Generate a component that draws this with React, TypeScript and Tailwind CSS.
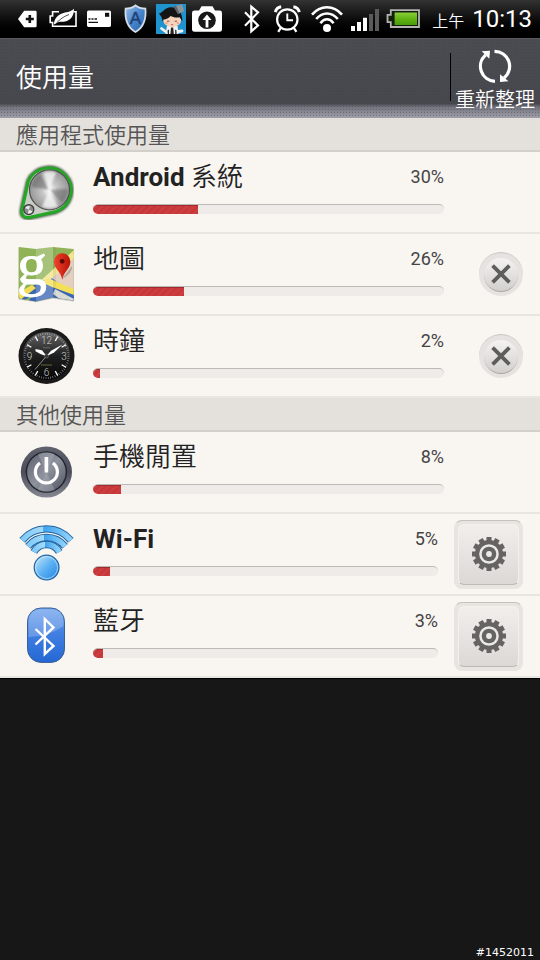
import React from 'react';

const StatusIcons: React.FC = () => (
  <div className="flex items-center gap-[6px]">
    <svg className="h-8 w-[23px]" viewBox="0 0 23 32">
      <path d="M2 16 8.2 7.8H19.5Q20.6 7.8 20.6 9V23Q20.6 24.2 19.5 24.2H8.2Z" fill="#fff" />
      <path d="M13.8 12v8M9.8 16h8" stroke="#111" strokeWidth="2.6" />
    </svg>
    <svg className="h-8 w-[34px]" viewBox="0 0 34 32" fill="none">
      <path d="M14 8.8H7.6V13H5.2V19.5H7.6V23.2H31V8.8H28.5" stroke="#fff" strokeWidth="1.6" />
      <path d="M9 21.5C9 16 12 12.5 17 10.5 21 9 25 9.5 29 5.8 29 13 25.5 17.5 20 18.6 16.5 19.3 13.5 18 11 20.5Z" fill="#fff" />
      <path d="M12 19.5C15 16 19 13.5 24 11.5" stroke="#222" strokeWidth=".8" />
    </svg>
    <svg className="h-8 w-7" viewBox="0 0 28 32">
      <rect x="2" y="7.5" width="24" height="16.4" rx="1.6" fill="#fff" />
      <path d="M20 9.8h4.2v4H20z" fill="#111" />
      <path d="M3.5 16h2M6.5 16h2M9.5 16h2.5M3.5 19.4H13" stroke="#111" strokeWidth="1.3" />
    </svg>
    <svg className="h-8 w-[31px]" viewBox="0 0 31 32">
      <defs>
        <linearGradient id="shield" x1="0" y1="0" x2="1" y2="1">
          <stop offset="0" stopColor="#8fb8e6" />
          <stop offset=".5" stopColor="#4a86cc" />
          <stop offset="1" stopColor="#2a62aa" />
        </linearGradient>
      </defs>
      <path d="M16.5 1.2C19 3.6 23 4.8 27.2 4.8 28.4 16 25.5 25.5 16.5 30 7.5 25.5 4.6 16 5.8 4.8 10 4.8 14 3.6 16.5 1.2Z" fill="#d5dde6" />
      <path d="M16.5 3.4C19 5.4 22.4 6.3 25.6 6.5 26.3 16 23.7 23.8 16.5 28 9.3 23.8 6.7 16 7.4 6.5 10.6 6.3 14 5.4 16.5 3.4Z" fill="url(#shield)" />
      <text x="16.5" y="20.5" textAnchor="middle" fontFamily="Liberation Sans" fontSize="17" fill="#1d4176" stroke="#1d4176" strokeWidth=".5">A</text>
    </svg>
    <svg className="h-8 w-[30px]" viewBox="0 0 30 32">
      <rect y="1" width="30" height="30" fill="#1f93cd" />
      <path d="M11 23H21.5L22.5 31H9.5Z" fill="#f2f2f2" />
      <path d="M15 24.5H17.2L17.8 31H14.4ZM11.5 27.5 13 26.5V31H11.8ZM19.2 26.5 20.6 27.5V31H19.2Z" fill="#222" />
      <ellipse cx="16.2" cy="17" rx="9" ry="7.2" fill="#f8d3bc" />
      <path d="M2.8 10.5C7 10 8.5 4.2 15 4.2 21.5 4.2 26.5 8.5 26.3 18 25.2 17.5 25 15.5 23.5 14.2 19.5 15.2 17 14 14.5 13 13 15 10 16.5 7.6 16.5L6.6 18.5C5.8 14 5.5 13.5 2.8 10.5Z" fill="#151515" />
      <path d="M17.5 3.5 26 1.2 28.2 8.2 22 11Z" fill="#8e9299" />
      <path d="M17.5 3.5 20 2.8 23.5 10.3 22 11Z" fill="#5d6168" />
      <path d="M11 18.2h2.4M18.6 18.2h2.4" stroke="#6b4a3a" strokeWidth=".9" />
      <circle cx="10.5" cy="20" r="1.1" fill="#ef9a88" />
      <circle cx="21.8" cy="20" r="1.1" fill="#ef9a88" />
      <path d="M15.2 21.5q1 .6 2 0" stroke="#a33" strokeWidth=".8" fill="none" />
      <path d="M5.5 25.5 9.5 28.5M26 28 22 28.5" stroke="#f3f3f3" strokeWidth="2.8" strokeLinecap="round" />
    </svg>
    <svg className="h-8 w-[30px]" viewBox="0 0 30 32">
      <path d="M9.5 3.2H20.5L23 7.6H27.5Q30 7.6 30 10V26.5Q30 28.8 27.5 28.8H2.5Q0 28.8 0 26.5V10Q0 7.6 2.5 7.6H7Z" fill="#fff" />
      <circle cx="15" cy="17.2" r="8.8" fill="#181818" />
      <path d="M15 11.5 19.5 17H16.4V24.5H13.6V17H10.5Z" fill="#fff" />
    </svg>
    <svg className="ml-[10px] h-8 w-[26px]" viewBox="0 0 26 32">
      <path d="M7 9.2 20 22.5 13.3 28.3V3.6L20 9.4 7 22.8" fill="none" stroke="#fff" strokeWidth="2.2" />
    </svg>
    <svg className="h-8 w-[33px]" viewBox="0 0 33 32" fill="none" stroke="#fff">
      <circle cx="17.3" cy="16.5" r="10.2" strokeWidth="2.2" />
      <path d="M17.3 10.5V17.3H23" strokeWidth="1.9" />
      <path d="M5.3 9.2C6 6.4 8.4 4.2 11.2 3.8M29.3 9.2C28.6 6.4 26.2 4.2 23.4 3.8" strokeWidth="3" />
      <path d="M10.8 24.8 8.2 28.8M23.8 24.8 26.4 28.8" strokeWidth="2.2" />
    </svg>
    <svg className="h-8 w-[35px]" viewBox="0 0 35 32" fill="none" stroke="#fff" strokeWidth="2.6">
      <path d="M3 11.6C11.5 1.8 24.5 1.8 33 11.6M7.2 16C13.5 8.6 22.5 8.6 28.8 16M11.4 20.2C15.5 15 20.5 15 24.6 20.2" />
      <circle cx="18" cy="25" r="4" fill="#fff" stroke="none" />
    </svg>
    <svg className="h-8 w-[30px]" viewBox="0 0 30 32">
      <path d="M1 23h4v5H1zM7 19h4v9H7zM13 14.7h4V28h-4z" fill="#fff" />
      <path d="M19 11h4v17h-4zM25 6h4v22h-4z" fill="#5a5a5a" />
    </svg>
    <svg className="h-8 w-[35px]" viewBox="0 0 35 32">
      <defs>
        <linearGradient id="charge" x2="0" y2="1">
          <stop offset="0" stopColor="#8ccf3a" />
          <stop offset=".5" stopColor="#62b414" />
          <stop offset="1" stopColor="#489a0b" />
        </linearGradient>
      </defs>
      <path d="M4.8 7.2H33V24H4.8V19.2H1.5V11.8H4.8Z" fill="#15200c" stroke="#b4b4b4" strokeWidth="1.8" />
      <path d="M8.6 9.5H31V22H8.6z" fill="url(#charge)" />
    </svg>
  </div>
);

const SystemIcon: React.FC = () => (
  <svg className="size-14" viewBox="0 0 56 56">
    <defs>
      <radialGradient id="metal">
        <stop offset="0" stopColor="#fff" />
        <stop offset=".4" stopColor="#c4c4c4" />
        <stop offset="1" stopColor="#979797" />
      </radialGradient>
      <filter id="glow" x="-20%" y="-20%" width="140%" height="140%">
        <feGaussianBlur stdDeviation="1.2" />
      </filter>
    </defs>
    <path d="M10.5 17A22.3 22.3 0 1 1 38 47.5L11 53.5Q3 54 4 46Z" fill="none" stroke="#3c5a3c" strokeWidth="5" filter="url(#glow)" />
    <path d="M10.5 17A22.3 22.3 0 1 1 38 47.5L11 53.5Q3 54 4 46Z" fill="#c9cdc6" stroke="#22a824" strokeWidth="3" />
    <circle cx="31.5" cy="25.8" r="20" fill="url(#metal)" stroke="#4f4f4f" strokeWidth="1.2" />
    <g filter="url(#glow)">
      <path d="M31.5 25.8 13.5 23A18.5 18.5 0 0 1 22 10ZM31.5 25.8 49.5 25A18.5 18.5 0 0 1 44 39Z" fill="#444" opacity=".4" />
      <path d="M31.5 25.8 25 9A18.5 18.5 0 0 1 38 8.6ZM31.5 25.8 40 42.4A18.5 18.5 0 0 1 24 42.8Z" fill="#fff" opacity=".7" />
    </g>
    <circle cx="10.8" cy="45.6" r="5" fill="#8c8c8c" stroke="#3e3e3e" strokeWidth="1.3" />
    <path d="M7 44Q9 41.5 12 42L10.8 45.6ZM14.5 47.5Q13 50 10 49.5L10.8 45.6Z" fill="#eee" />
  </svg>
);

const MapsIcon: React.FC = () => (
  <svg className="size-14 overflow-visible" viewBox="0 0 56 56">
    <defs>
      <clipPath id="sheet">
        <path d="M.7 1 18 3 35 1 55.7 3V54.5L35 51.5 18 55.5.7 52.5Z" />
      </clipPath>
      <linearGradient id="pin">
        <stop offset="0" stopColor="#f0422c" />
        <stop offset="1" stopColor="#b81408" />
      </linearGradient>
    </defs>
    <path d="M.7 2 18 4 35 2 55.7 4V55.5L35 52.5 18 56 .7 53.5Z" fill="#8a8a80" opacity=".5" />
    <g clipPath="url(#sheet)">
      <path d="M0 0H56V56H0z" fill="#8fb356" />
      <path d="M34 28 56 8V44L34 34Z" fill="#e4cfc0" />
      <path d="M17 40 56 4V12L19 46Z" fill="#f1e58d" />
      <path d="M16 46 34 32 56 50V56H10Z" fill="#3a67b4" />
      <path d="M0 50 24 34 42 38 56 48V55L34 42 22 44 4 56Z" fill="#3a67b4" />
      <path d="M23 36 30 32 56 43V49L34 41Z" fill="#f4df58" />
      <path d="M0 47 14 39 18 42 2 54Z" fill="#f2dd54" />
      <path d="M37 43 56 53V56H46L35 48Z" fill="#dadbd5" />
      <path d="M18 0H35V56H18z" fill="#fff" opacity=".22" />
      <path d="M35 0h3V56h-3z" fill="#555" opacity=".08" />
    </g>
    <text x="-1" y="38" fontFamily="Liberation Serif" fontSize="60" fill="#fff" stroke="#fff" strokeWidth=".8">g</text>
    <path d="M44 33 54 20Q55 27 44 33Z" fill="#444" opacity=".3" />
    <path d="M44.3 34C43.5 26 36 23 36 15.5A8.2 8.2 0 0 1 52.4 15.5C52.4 23 45.2 26 44.3 34Z" fill="url(#pin)" />
    <circle cx="44.2" cy="15.3" r="2.4" fill="#5a0903" />
  </svg>
);

const hourMarks = [30, 60, 120, 150, 210, 240, 300, 330];

const ClockIcon: React.FC = () => (
  <svg className="size-14 overflow-visible" viewBox="0 0 56 56">
    <defs>
      <linearGradient id="dial" x2="0" y2="1">
        <stop offset="0" stopColor="#666" />
        <stop offset=".5" stopColor="#1f1f1f" />
        <stop offset="1" stopColor="#050505" />
      </linearGradient>
    </defs>
    <circle cx="28.5" cy="28" r="28" fill="#1a1a1a" />
    <circle cx="28.5" cy="28" r="24" fill="url(#dial)" />
    <circle cx="28.5" cy="28" r="22" fill="none" stroke="#bbb" strokeWidth="2" strokeDasharray=".5 1.804" />
    {hourMarks.map((angle) => (
      <path key={angle} d="M28.5 5.5v5" stroke="#fff" strokeWidth="1.3" transform={`rotate(${angle} 28.5 28)`} />
    ))}
    <g fontFamily="Roboto" fontWeight="300" fontSize="10" fill="#ccc" textAnchor="middle">
      <text x="28.5" y="16">12</text>
      <text x="46" y="31.5">3</text>
      <text x="28.5" y="48">6</text>
      <text x="11.5" y="31.5">9</text>
    </g>
    <path d="M25 19.8h7" stroke="#777" strokeWidth=".8" />
    <path d="M23 37h11" stroke="#7d7642" strokeWidth=".8" />
    <path d="M28.5 28 17 41.5" stroke="#aaa" strokeWidth=".8" />
    <path d="M29 28.5 24 22.3 17.5 21 17.5 23.2 22.5 26Z" fill="#fff" />
    <path d="M28 28.5 33 22.8 44.5 16.4 36 24.6Z" fill="#fff" />
    <circle cx="28.5" cy="28" r="2" fill="#333" stroke="#888" strokeWidth=".5" />
  </svg>
);

const PowerIcon: React.FC = () => (
  <svg className="size-14" viewBox="0 0 56 56">
    <defs>
      <linearGradient id="rim" x2="0" y2="1">
        <stop offset="0" stopColor="#60636e" />
        <stop offset=".5" stopColor="#4b4e5a" />
        <stop offset="1" stopColor="#858892" />
      </linearGradient>
      <linearGradient id="cap" x2="1" y2="1">
        <stop offset="0" stopColor="#5a5e6b" />
        <stop offset=".5" stopColor="#8e929d" />
        <stop offset="1" stopColor="#4c505d" />
      </linearGradient>
    </defs>
    <circle cx="28.4" cy="28" r="25.6" fill="url(#rim)" />
    <circle cx="28.4" cy="28" r="20" fill="url(#cap)" stroke="#23252e" strokeWidth="1.4" />
    <path d="M28.4 28 20 10A20 20 0 0 1 36.8 10ZM28.4 28 20 46A20 20 0 0 0 36.8 46Z" fill="#c3c6cc" opacity=".3" />
    <path d="M22 19A11 11 0 1 0 34.8 19" fill="none" stroke="#fff" strokeWidth="3.2" />
    <path d="M28.4 13v15.5" stroke="#fff" strokeWidth="3.6" />
  </svg>
);

const wifiArcs = ['M4.2 14.3A31.6 31.6 0 0 1 52.8 14.3', 'M10 20.4A23.8 23.8 0 0 1 47 20.4', 'M15.8 26A14.5 14.5 0 0 1 41.2 26'];

const WifiIcon: React.FC = () => (
  <svg className="size-14 overflow-visible" viewBox="0 0 56 56" fill="none">
    <defs>
      <linearGradient id="band">
        <stop offset="0" stopColor="#7fcaf8" />
        <stop offset=".43" stopColor="#a5dafa" />
        <stop offset=".44" stopColor="#3fa3ee" />
        <stop offset="1" stopColor="#8fd2fa" />
      </linearGradient>
      <linearGradient id="ball" x2="1" y2="1">
        <stop offset="0" stopColor="#cdeafd" />
        <stop offset=".5" stopColor="#5cb1f3" />
        <stop offset="1" stopColor="#1f82e2" />
      </linearGradient>
    </defs>
    {wifiArcs.map((arc) => (
      <g key={arc}>
        <path d={arc} stroke="#23659f" strokeWidth="7.4" />
        <path d={arc} stroke="url(#band)" strokeWidth="5.4" />
      </g>
    ))}
    <circle cx="28.6" cy="41.6" r="12.4" fill="url(#ball)" stroke="#23659f" strokeWidth="1.2" />
    <circle cx="28.6" cy="41.6" r="11" stroke="#d8effd" strokeWidth=".9" opacity=".7" />
  </svg>
);

const BluetoothIcon: React.FC = () => (
  <svg className="size-14 overflow-visible" viewBox="0 0 56 56">
    <defs>
      <linearGradient id="tooth" x2="0" y2="1">
        <stop offset="0" stopColor="#6fa3ee" />
        <stop offset=".45" stopColor="#4280e2" />
        <stop offset="1" stopColor="#2468d4" />
      </linearGradient>
    </defs>
    <rect x="9.5" y="0" width="37" height="54.4" rx="13.5" fill="url(#tooth)" stroke="#3a6193" strokeWidth="1" />
    <path d="M10.5 14Q10.5 1.5 23 1.2H33Q45.5 1.5 45.5 14V18Q30 29 10.5 29Z" fill="#fff" opacity=".22" />
    <path d="M17.5 21 35.5 38 26.8 46V11L35.5 19.4 17.5 36.5" fill="none" stroke="#fff" strokeWidth="2.4" />
  </svg>
);

const teeth = [0, 30, 60, 90, 120, 150];

const GearButton: React.FC<{ label: string }> = ({ label }) => (
  <button
    aria-label={label}
    className="flex size-[69px] shrink-0 items-center justify-center rounded-lg border border-[#e8e5e2] border-t-[#c5c2bf] bg-[#e8e5e1] p-[3px]"
  >
    <span className="flex size-full items-center justify-center rounded-md border border-[#f3f1ee] border-b-[#bcb9b6] bg-linear-to-b from-[#f1eeeb] to-[#dbd8d5]">
      <svg className="size-9" viewBox="0 0 36 36">
        <g stroke="#666462" strokeWidth="5">
          {teeth.map((angle) => (
            <path key={angle} d="M18 1v34" transform={`rotate(${angle} 18 18)`} />
          ))}
        </g>
        <circle cx="18" cy="18" r="14" fill="#666462" />
        <circle cx="18" cy="18" r="9.8" fill="#eceae7" />
        <circle cx="18" cy="18" r="7.3" fill="#666462" />
        <circle cx="18" cy="18" r="2.9" fill="#eceae7" />
      </svg>
    </span>
  </button>
);

const CloseButton: React.FC<{ label: string }> = ({ label }) => (
  <button
    aria-label={label}
    className="flex size-11 shrink-0 items-center justify-center rounded-full border-t border-[#c9c6c4] bg-[#e5e2df]"
  >
    <span className="flex size-[34px] items-center justify-center rounded-full border-b border-[#a9a7a5] bg-linear-to-b from-[#f5f3f1] to-[#d2d0cd]">
      <svg className="size-5" viewBox="0 0 20 20" stroke="#5f5d5b" strokeWidth="3.8">
        <path d="M1.6 1.6 18.4 18.4M18.4 1.6 1.6 18.4" />
      </svg>
    </span>
  </button>
);

interface UsageRowProps {
  icon: React.ReactNode;
  name: React.ReactNode;
  label: string;
  percent: number;
  action?: 'close' | 'settings';
}

const UsageRow: React.FC<UsageRowProps> = ({ icon, name, label, percent, action }) => (
  <li className="flex h-[82px] items-center border-b-2 border-[#e9e6e2] bg-[#f9f5f1] pl-[18px] pr-[17px] text-[#222]">
    {icon}
    <div className="ml-[19px] flex grow flex-col gap-[10px] pb-[10px]">
      <div className="flex items-center justify-between">
        <h3 className="text-[26px] font-[350] leading-8">{name}</h3>
        <span className="text-lg leading-[34px] text-[#444]">{percent}%</span>
      </div>
      <div
        role="progressbar"
        aria-label={label}
        aria-valuenow={percent}
        className="h-[10px] overflow-hidden rounded-full border-t border-[#bdb9b6] bg-[#efebe8]"
      >
        <div
          className="h-full border-t border-[#a02a2c] bg-[repeating-linear-gradient(135deg,#cd3d3f_0px,#cd3d3f_3px,#c43739_3px,#c43739_5px)]"
          style={{ width: `${percent}%` }}
        />
      </div>
    </div>
    {action === 'settings' ? (
      <div className="ml-4">
        <GearButton label={`${label} 設定`} />
      </div>
    ) : (
      <div className="ml-[35px] w-11">{action === 'close' && <CloseButton label={`停止 ${label}`} />}</div>
    )}
  </li>
);

const SectionTitle: React.FC<{ children: React.ReactNode }> = ({ children }) => (
  <h2 className="h-[34px] border-b-2 border-[#d3d0cc] bg-[#e4e1dd] pl-4 text-[22px] font-[350] leading-9 text-[#555]">
    {children}
  </h2>
);

export default function App() {
  return (
    <div className="min-h-screen flex flex-col bg-[#171717] font-['Roboto','Noto_Sans_CJK_TC',sans-serif]">
      <div className="flex h-[38px] items-center bg-linear-to-b from-[#333] to-black pl-4 pr-2 text-white">
        <StatusIcons />
        <div className="ml-auto flex items-baseline gap-2 whitespace-nowrap leading-10">
          <span className="text-base font-[350]">上午</span>
          <span className="text-2xl leading-10">10:13</span>
        </div>
      </div>

      <header className="flex h-20 items-start justify-between border-t border-[#5a5a60] bg-[radial-gradient(#3e3e4566_1px,transparent_1px),linear-gradient(#4b4b52_0%,#47474e_82%,#73737d_86%,#a0a0aa_100%)] bg-size-[3px_3px,auto] pr-px text-white">
        <h1 className="pl-4 text-[26px] font-[350] leading-[78px]">使用量</h1>
        <div className="flex items-start">
          <div className="mt-[14px] h-12 w-px bg-black" />
          <button className="flex w-[88px] flex-col items-center pt-[9px]">
            <svg className="size-9" viewBox="0 0 36 36" fill="none" stroke="#fff" strokeWidth="3.2">
              <path d="M18 33.3A15 15 0 0 1 8.6 7M17.5 3.3A15 15 0 0 1 27 30" />
              <path d="M4.7 3.3 13 2.7 12.3 10.7ZM23 26.2V34L31.5 33.3Z" fill="#fff" stroke="none" />
            </svg>
            <span className="text-xl font-[350] leading-8">重新整理</span>
          </button>
        </div>
      </header>

      <main className="border-b border-black">
        <SectionTitle>應用程式使用量</SectionTitle>
        <ul>
          <UsageRow
            icon={<SystemIcon />}
            name={<><b className="font-bold">Android</b> 系統</>}
            label="Android 系統"
            percent={30}
          />
          <UsageRow icon={<MapsIcon />} name="地圖" label="地圖" percent={26} action="close" />
          <UsageRow icon={<ClockIcon />} name="時鐘" label="時鐘" percent={2} action="close" />
        </ul>
        <SectionTitle>其他使用量</SectionTitle>
        <ul>
          <UsageRow icon={<PowerIcon />} name="手機閒置" label="手機閒置" percent={8} />
          <UsageRow
            icon={<WifiIcon />}
            name={<b className="font-bold">Wi-Fi</b>}
            label="Wi-Fi"
            percent={5}
            action="settings"
          />
          <UsageRow icon={<BluetoothIcon />} name="藍牙" label="藍牙" percent={3} action="settings" />
        </ul>
      </main>

      <footer className="mt-auto pr-[6px] text-right font-['DejaVu_Sans',sans-serif] text-[11px] leading-[14px] text-white">
        #1452011
      </footer>
    </div>
  );
}
